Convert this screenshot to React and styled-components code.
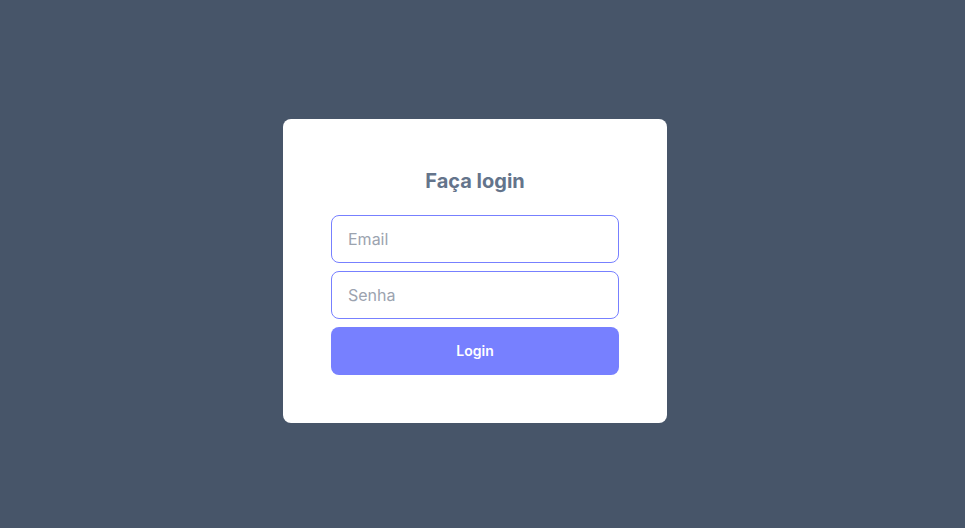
import React from 'react';
import styled, { createGlobalStyle } from 'styled-components';

const GlobalStyle = createGlobalStyle`
  html, body {
    margin: 0;
    padding: 0;
    background: #475569;
  }
  * {
    box-sizing: border-box;
  }
`;

const Page = styled.main`
  height: 100vh;
  display: flex;
  align-items: center;
  justify-content: center;
  /* card sits slightly off-centre in the reference */
  padding: 14px 15px 0 0;
  font-family: Inter, 'Noto Sans', sans-serif;
`;

const Card = styled.form`
  width: 384px;
  padding: 48px;
  background: #ffffff;
  border-radius: 8px;
  display: flex;
  flex-direction: column;
`;

const Title = styled.h1`
  margin: 0 0 20px;
  font-size: 20px;
  line-height: 28px;
  font-weight: 700;
  color: #64748b;
  text-align: center;
`;

const Field = styled.input`
  width: 100%;
  height: 48px;
  margin-bottom: 8px;
  padding: 0 16px;
  border: 1px solid #7780ff;
  border-radius: 8px;
  font-family: inherit;
  font-size: 16px;
  color: #334155;
  outline: none;
  &::placeholder {
    color: #9ca3af;
  }
`;

const Button = styled.button`
  width: 100%;
  height: 48px;
  padding: 0 0 2px;
  border: none;
  border-radius: 8px;
  background: #7780ff;
  color: #ffffff;
  font-family: inherit;
  font-size: 14px;
  font-weight: 600;
  cursor: pointer;
`;

const App = () => (
  <>
    <GlobalStyle />
    <Page>
      <Card onSubmit={(e) => e.preventDefault()}>
        <Title>Faça login</Title>
        <Field type="email" placeholder="Email" />
        <Field type="password" placeholder="Senha" />
        <Button type="submit">Login</Button>
      </Card>
    </Page>
  </>
);

export default App;
